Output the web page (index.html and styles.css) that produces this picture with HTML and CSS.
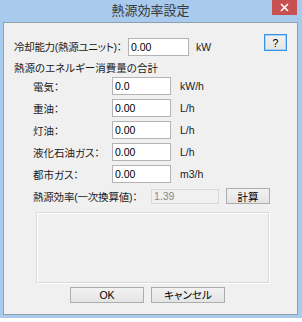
FILE: index.html
```html
<!DOCTYPE html>
<html lang="ja">
<head>
  <meta charset="UTF-8">
  <title>熱源効率設定</title>
  <link rel="stylesheet" href="styles.css">
</head>
<body>
  <div class="window">
    <div class="titlebar">
      <span></span>
      <span class="title">熱源効率設定</span>
      <button class="close" aria-label="閉じる">
        <svg width="9" height="9" viewBox="0 0 9 9"><path d="M1 1L8 8M8 1L1 8" stroke="#fff" stroke-width="1.6" fill="none"/></svg>
      </button>
    </div>

    <div class="dialog">
      <div class="row-top">
        <label class="lbl-main">冷却能力(熱源ユニット)：</label>
        <input class="field field-main" type="text" value="0.00">
        <span class="unit unit-main">kW</span>
        <button class="btn btn-help">?</button>
      </div>

      <div class="heading">熱源のエネルギー消費量の合計</div>

      <div class="energy">
        <label>電気：</label>
        <input class="field" type="text" value="0.0">
        <span class="unit">kW/h</span>

        <label>重油：</label>
        <input class="field" type="text" value="0.00">
        <span class="unit">L/h</span>

        <label>灯油：</label>
        <input class="field" type="text" value="0.00">
        <span class="unit">L/h</span>

        <label>液化石油ガス：</label>
        <input class="field" type="text" value="0.00">
        <span class="unit">L/h</span>

        <label>都市ガス：</label>
        <input class="field" type="text" value="0.00">
        <span class="unit">m3/h</span>
      </div>

      <div class="row-result">
        <label class="lbl-result">熱源効率(一次換算値)：</label>
        <input class="field field-off" type="text" value="1.39" disabled>
        <button class="btn btn-calc">計算</button>
      </div>

      <div class="notes"></div>

      <div class="actions">
        <button class="btn btn-action">OK</button>
        <button class="btn btn-action">キャンセル</button>
      </div>
    </div>
  </div>
</body>
</html>
```

FILE: styles.css
```css
body {
  margin: 0;
  background: #fff;
  font-family: "Liberation Sans", "Noto Sans CJK JP", sans-serif;
  font-size: 10.5px;
  font-feature-settings: "palt";
  color: #000;
}
label, .unit, .heading {
  white-space: nowrap;
  color: #1a1a1a;
}
.window {
  width: 302px;
  height: 318px;
  box-sizing: border-box;
  padding: 0 4px 3px 3px;
  background: #a8caec;
  display: flex;
  flex-direction: column;
}
.titlebar {
  height: 22px;
  display: grid;
  grid-template-columns: 1fr auto 1fr;
}
.title {
  font-size: 13px;
  line-height: 22px;
  color: #3a3a3a;
  font-feature-settings: normal;
}
.close {
  justify-self: end;
  width: 25px;
  height: 15px;
  margin-right: 1px;
  padding: 0;
  border: none;
  background: #c75050;
  display: flex;
  align-items: center;
  justify-content: center;
}
.dialog {
  flex: 1;
  background: #f0f0f0;
  border: 1px solid #8e9fae;
  padding: 11px 10px 0 10px;
}
.field {
  box-sizing: border-box;
  height: 18px;
  margin: 0;
  padding: 0 2px;
  border: 1px solid #b4b4b4;
  background: #fff;
  font: inherit;
  color: #000;
}
.btn {
  box-sizing: border-box;
  margin: 0;
  padding: 0;
  border: 1px solid #adadad;
  background: linear-gradient(#f2f2f2, #e4e4e4);
  font: inherit;
  color: #000;
}
.row-top {
  display: flex;
  align-items: flex-start;
}
.lbl-main {
  width: 114px;
  margin-top: 4px;
  line-height: 18px;
  letter-spacing: -0.3px;
}
.field-main {
  width: 61px;
  margin-top: 4px;
}
.unit-main {
  margin-left: 7px;
  margin-top: 4px;
  line-height: 18px;
}
.btn-help {
  margin-left: auto;
  width: 23px;
  height: 17px;
  border-color: #3593e8;
  box-shadow: inset 0 0 0 1px #a9d2f6;
  line-height: 14px;
}
.heading {
  margin-top: 5px;
  line-height: 14px;
}
.energy {
  margin-top: 2px;
  padding-left: 19px;
  display: grid;
  grid-template-columns: 79px 59px auto;
  grid-auto-rows: 18px;
  row-gap: 4px;
  align-items: center;
}
.energy .field {
  width: 59px;
}
.energy .unit {
  margin-left: 9px;
}
.row-result {
  margin-top: 5px;
  padding-left: 19px;
  height: 16px;
  display: flex;
  align-items: center;
}
.lbl-result {
  width: 118px;
  letter-spacing: -0.2px;
}
.field-off {
  width: 68px;
  height: 15px;
  border-color: #d9d9d9;
  background: #f0f0f0;
  color: #8a8a8a;
}
.btn-calc {
  width: 44px;
  height: 16px;
  margin-left: 7px;
}
.notes {
  margin: 8px 0 0 22px;
  width: 233px;
  height: 71px;
  box-sizing: border-box;
  border: 1px solid #dadada;
  box-shadow: inset 1px 1px 0 #fff, 1px 1px 0 #fff;
}
.actions {
  margin: 4px 0 0 56px;
  display: flex;
  gap: 7px;
}
.btn-action {
  width: 74px;
  height: 16px;
  line-height: 14px;
}
```
